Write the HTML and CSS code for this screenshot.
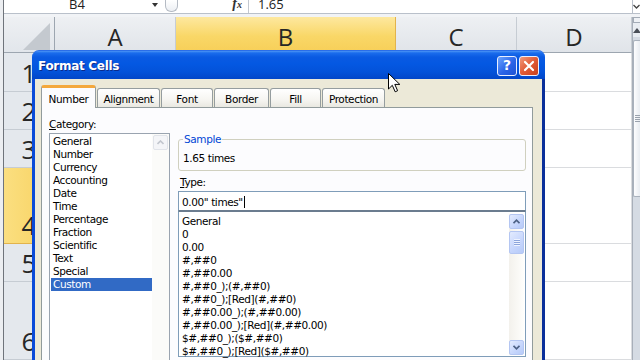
FILE: index.html
```html
<!DOCTYPE html>
<html>
<head>
<meta charset="utf-8">
<title>Format Cells</title>
<link rel="stylesheet" href="styles.css">
</head>
<body>
<div class="app">
  <div class="edge"></div>
  <div class="sheet">
    <div class="fbar">
      <div class="namebox"><span class="fb-text">B4</span></div>
      <div class="nb-arrow"><span class="tri-down"></span></div>
      <div class="grip"></div>
      <div class="fx"><span class="fb-text fx-text">f<small>x</small></span></div>
      <div class="fvalue"><span class="fb-text">1.65</span></div>
    </div>
    <div class="grid">
      <div class="corner"><svg class="corner-tri" width="51" height="36" viewBox="0 0 51 36"><polygon points="19,33 46,6 46,33" fill="#c4c9cf"/></svg></div>
      <div class="colhead">A</div>
      <div class="colhead sel">B</div>
      <div class="colhead">C</div>
      <div class="colhead">D</div>

      <div class="rowhead">1</div><div class="cell"></div><div class="cell"></div><div class="cell"></div><div class="cell"></div>
      <div class="rowhead">2</div><div class="cell"></div><div class="cell"></div><div class="cell"></div><div class="cell"></div>
      <div class="rowhead">3</div><div class="cell"></div><div class="cell"></div><div class="cell"></div><div class="cell"></div>
      <div class="rowhead sel">4</div><div class="cell"></div><div class="cell"></div><div class="cell"></div><div class="cell"></div>
      <div class="rowhead">5</div><div class="cell"></div><div class="cell"></div><div class="cell"></div><div class="cell"></div>
      <div class="rowhead">6</div><div class="cell"></div><div class="cell"></div><div class="cell"></div><div class="cell"></div>
    </div>
  </div>
  <div class="vscroll">
    <div class="vs-expand"><svg width="7" height="5" viewBox="0 0 7 5"><path d="M0.5 1 L3.5 4 L6.5 1" stroke="#444" stroke-width="1.3" fill="none"/></svg></div>
    <div class="vs-gap"></div>
    <div class="vs-body">
      <div class="vs-split"></div>
      <div class="vs-up"><span class="tri-up"></span></div>
      <div class="vs-thumb"><span class="vs-grip"></span></div>
      <div class="vs-track"></div>
    </div>
  </div>

  <div class="dialog">
    <div class="titlebar">
      <div class="title">Format Cells</div>
      <div class="tbtn help">?</div>
      <div class="tbtn close"><svg width="12" height="12" viewBox="0 0 12 12"><path d="M2 2 L10 10 M10 2 L2 10" stroke="#fff" stroke-width="2.2" stroke-linecap="round"/></svg></div>
    </div>
    <div class="dbody">
      <div class="tabs">
        <div class="tab active t-number">Number</div>
        <div class="tab t-align">Alignment</div>
        <div class="tab t-font">Font</div>
        <div class="tab t-border">Border</div>
        <div class="tab t-fill">Fill</div>
        <div class="tab t-prot">Protection</div>
      </div>
      <div class="panel">
        <div class="leftcol">
          <div class="label"><u>C</u>ategory:</div>
          <div class="catlist">
            <div class="items">
              <div class="item">General</div>
              <div class="item">Number</div>
              <div class="item">Currency</div>
              <div class="item">Accounting</div>
              <div class="item">Date</div>
              <div class="item">Time</div>
              <div class="item">Percentage</div>
              <div class="item">Fraction</div>
              <div class="item">Scientific</div>
              <div class="item">Text</div>
              <div class="item">Special</div>
              <div class="item selected">Custom</div>
            </div>
            <div class="cat-sb">
              <div class="cat-sb-btn"><svg width="7" height="5" viewBox="0 0 7 5"><path d="M0.5 4 L3.5 1 L6.5 4" stroke="#c2c6ce" stroke-width="1.6" fill="none"/></svg></div>
            </div>
          </div>
        </div>
        <div class="rightcol">
          <fieldset class="sample">
            <legend>Sample</legend>
            <div class="sample-text">1.65 times</div>
          </fieldset>
          <div class="label type-label"><u>T</u>ype:</div>
          <div class="typeinput">0.00" times"<span class="caret"></span></div>
          <div class="typelist">
            <div class="items">
              <div class="item">General</div>
              <div class="item">0</div>
              <div class="item">0.00</div>
              <div class="item">#,##0</div>
              <div class="item">#,##0.00</div>
              <div class="item">#,##0_);(#,##0)</div>
              <div class="item">#,##0_);[Red](#,##0)</div>
              <div class="item">#,##0.00_);(#,##0.00)</div>
              <div class="item">#,##0.00_);[Red](#,##0.00)</div>
              <div class="item">$#,##0_);($#,##0)</div>
              <div class="item">$#,##0_);[Red]($#,##0)</div>
            </div>
            <div class="sb">
              <div class="sb-btn"><svg width="7" height="5" viewBox="0 0 7 5"><path d="M0.5 4.2 L3.5 1.2 L6.5 4.2" stroke="#4d6185" stroke-width="1.7" fill="none"/></svg></div>
              <div class="sb-thumb"><span class="sb-grip"></span></div>
              <div class="sb-track"></div>
              <div class="sb-btn"><svg width="7" height="5" viewBox="0 0 7 5"><path d="M0.5 0.8 L3.5 3.8 L6.5 0.8" stroke="#4d6185" stroke-width="1.7" fill="none"/></svg></div>
            </div>
          </div>
        </div>
      </div>
    </div>
  </div>

  <svg class="cursor" width="13" height="20" viewBox="0 0 13 20"><path d="M0.5 0.5 L0.5 16 L4.3 12.3 L7.2 18.8 L9.6 17.7 L6.8 11.4 L11.8 11.4 Z" fill="#fff" stroke="#000" stroke-width="1" stroke-linejoin="miter"/></svg>
</div>
</body>
</html>
```

FILE: styles.css
```css
html, body {
  margin: 0;
  padding: 0;
}
body {
  width: 640px;
  height: 360px;
  overflow: hidden;
  background: #fff;
}
.app {
  position: relative;
  display: flex;
  width: 640px;
  height: 360px;
  overflow: hidden;
  background: #fff;
}

/* ---------- Excel sheet ---------- */
.edge {
  flex: none;
  width: 3px;
  border-right: 1px solid #6f747b;
  background: #eceef1;
}
.sheet {
  flex: none;
  width: 628px;
  display: flex;
  flex-direction: column;
  background: #f1f3f6;
}
.fbar {
  flex: none;
  height: 13px;
  display: flex;
  overflow: hidden;
  margin-bottom: 3px;
  border-bottom: 1px solid #b9c0ca;
  background: #fff;
  font-family: "Open Sans", sans-serif;
  font-size: 13px;
  color: #222;
}
.fb-text {
  display: block;
  line-height: 16px;
  margin-top: -4px;
}
.namebox {
  width: 146px;
  text-align: center;
}
.nb-arrow {
  width: 10px;
  display: flex;
  justify-content: center;
}
.tri-down {
  width: 0;
  height: 0;
  margin-top: 3px;
  border-left: 3px solid transparent;
  border-right: 3px solid transparent;
  border-top: 4px solid #333;
}
.grip {
  width: 11px;
  height: 11px;
  margin-left: 5px;
  border: 1px solid #b5bbc4;
  border-top: none;
  border-radius: 0 0 6px 6px;
  background: linear-gradient(#fff, #eceff3);
}
.fx {
  width: 70px;
  box-sizing: border-box;
  padding-right: 6px;
  text-align: right;
}
.fx-text {
  font-family: "Liberation Serif", serif;
  font-style: italic;
  font-weight: bold;
  font-size: 14px;
  color: #333;
}
.fx-text small {
  font-size: 10px;
}
.fvalue {
  flex: 1;
  padding-left: 9px;
  border-left: 1px solid #c3c8d0;
}

.grid {
  flex: none;
  display: grid;
  grid-template-columns: 51px 121px 220px 121px 115px;
  grid-template-rows: 36px 39px 38px 38px 76px 38px 78px;
  background: #fff;
}
.corner, .colhead, .rowhead, .cell {
  box-sizing: border-box;
  border-right: 1px solid #dadcdf;
  border-bottom: 1px solid #dadcdf;
}
.corner {
  background: linear-gradient(#eef0f3, #e2e6eb);
  border-right-color: #9da6b0;
  border-bottom-color: #9da6b0;
}
.corner-tri {
  display: block;
}
.colhead {
  display: flex;
  justify-content: center;
  align-items: flex-end;
  padding-bottom: 3px;
  background: linear-gradient(#eef0f3, #e0e4e9);
  border-right-color: #c6ccd3;
  border-bottom-color: #9da6b0;
  font-family: "Open Sans", sans-serif;
  font-size: 24px;
  line-height: 24px;
  color: #262626;
}
.colhead.sel {
  background: linear-gradient(#fde89f, #f9d767 55%, #f7cf58);
  border-right-color: #e2b34c;
  border-bottom-color: #e2a93a;
}
.rowhead {
  display: flex;
  justify-content: center;
  align-items: flex-end;
  padding-bottom: 6px;
  background: #e4e8ed;
  border-right-color: #9da6b0;
  border-bottom-color: #c6ccd3;
  font-family: "Open Sans", sans-serif;
  font-size: 26px;
  line-height: 24px;
  color: #262626;
}
.rowhead.sel {
  background: linear-gradient(90deg, #fbdf80, #f7d161);
  border-bottom-color: #e2b34c;
}

.vscroll {
  flex: none;
  width: 8px;
  display: flex;
  flex-direction: column;
}
.vs-expand {
  height: 13px;
  display: flex;
  align-items: center;
  justify-content: center;
  border-left: 1px solid #b9c0ca;
  border-bottom: 1px solid #b9c0ca;
  background: #fff;
}
.vs-gap {
  height: 3px;
  background: #f1f3f6;
}
.vs-body {
  flex: 1;
  display: flex;
  flex-direction: column;
  border-left: 1px solid #a8afb9;
  background: #d5dbe3;
}
.vs-split {
  height: 6px;
  box-sizing: border-box;
  border: 1px solid #a3abb6;
  border-right: none;
  background: #eef1f5;
}
.vs-up {
  height: 14px;
  display: flex;
  align-items: center;
  justify-content: center;
  background: #e9edf2;
}
.tri-up {
  width: 0;
  height: 0;
  border-left: 4px solid transparent;
  border-right: 4px solid transparent;
  border-bottom: 5px solid #4a4f57;
}
.vs-thumb {
  height: 157px;
  margin-top: 3px;
  box-sizing: border-box;
  border: 1px solid #a9b1bc;
  border-right: none;
  border-radius: 2px 0 0 2px;
  background: linear-gradient(90deg, #fdfdfe, #e8ecf1);
  display: flex;
  align-items: center;
  justify-content: center;
}
.vs-grip {
  width: 5px;
  height: 7px;
  background: repeating-linear-gradient(#9aa2ad 0 1px, transparent 1px 2px);
}
.vs-track {
  flex: 1;
}

/* ---------- Dialog ---------- */
.dialog {
  position: absolute;
  left: 32px;
  top: 50px;
  width: 513px;
  height: 320px;
  display: flex;
  flex-direction: column;
  font-family: "DejaVu Sans", sans-serif;
  font-size: 10.5px;
  line-height: 13px;
  letter-spacing: -0.4px;
  color: #000;
}
.titlebar {
  flex: none;
  height: 29px;
  box-sizing: border-box;
  display: flex;
  align-items: center;
  padding: 1px 6px 0 6px;
  border-radius: 7px 7px 0 0;
  background: linear-gradient(#4d95f5 0, #1a6cec 2px, #0a5ae2 6px, #0458e2 45%, #0352d9 75%, #0246c8 100%);
  border-top: 1px solid #2b6ee8;
}
.title {
  flex: 1;
  padding-top: 2px;
  font-weight: bold;
  font-size: 12px;
  letter-spacing: -0.3px;
  color: #fff;
  text-shadow: 1px 1px 0 #0c2a8a;
}
.tbtn {
  width: 20px;
  height: 20px;
  box-sizing: border-box;
  margin-left: 2px;
  border: 1px solid #e9efff;
  border-radius: 3px;
  display: flex;
  align-items: center;
  justify-content: center;
}
.help {
  background: linear-gradient(135deg, #6aa4ff, #2a64e8 55%, #1c52d4);
  color: #fff;
  font-weight: bold;
  font-size: 14px;
  letter-spacing: 0;
}
.close {
  background: linear-gradient(135deg, #f29a7c, #e05a36 50%, #c9401c);
}
.dbody {
  flex: 1;
  display: flex;
  flex-direction: column;
  padding: 6px 9px 0 6px;
  background: #ece9d8;
  border-left: 3px solid #0b4bd8;
  border-right: 3px solid #0a2f9a;
}
.tabs {
  position: relative;
  z-index: 1;
  flex: none;
  height: 22px;
  display: flex;
  align-items: flex-end;
  gap: 1px;
}
.tab {
  height: 19px;
  box-sizing: border-box;
  padding-top: 2px;
  line-height: 16px;
  text-align: center;
  border: 1px solid #959d9f;
  border-bottom: none;
  border-radius: 3px 3px 0 0;
  background: linear-gradient(#ffffff, #f6f5f1 60%, #e9e8e1);
}
.tab.active {
  height: 23px;
  margin-bottom: -1px;
  padding-top: 3px;
  border-top: 3px solid #f4a83c;
  background: #fcfcfe;
}
.t-number { width: 55px; }
.t-align { width: 63px; }
.t-font { width: 52px; }
.t-border { width: 55px; }
.t-fill { width: 51px; }
.t-prot { width: 63px; }

.panel {
  flex: 1;
  display: flex;
  gap: 8px;
  padding: 10px 6px 0 7px;
  border: 1px solid #919b9c;
  background: #fcfcfe;
}
.leftcol {
  width: 121px;
  display: flex;
  flex-direction: column;
}
.label {
  height: 13px;
}
.catlist {
  flex: 1;
  margin-top: 2px;
  display: flex;
  border: 1px solid #9aa4b0;
  background: #fff;
}
.catlist .items {
  width: 102px;
  padding-top: 1px;
}
.catlist .item {
  margin-left: 1px;
  padding-left: 2px;
  height: 13px;
}
.catlist .item.selected {
  background: #316ac5;
  color: #fff;
}
.cat-sb {
  width: 17px;
  background: #fbfbf9;
}
.cat-sb-btn {
  height: 15px;
  margin: 1px 1px 0 1px;
  box-sizing: border-box;
  border: 1px solid #e1e4ea;
  border-radius: 2px;
  background: #f4f5f8;
  display: flex;
  align-items: center;
  justify-content: center;
}

.rightcol {
  width: 348px;
  display: flex;
  flex-direction: column;
}
.sample {
  margin: 15px 0 0 0;
  padding: 6px 4px 5px 4px;
  border: 1px solid #d0d0bf;
  border-radius: 3px;
  min-width: 0;
}
.sample legend {
  padding: 0 1px;
  color: #0046d5;
}
.type-label {
  margin-top: 5px;
  padding-left: 2px;
}
.typeinput {
  margin-top: 2px;
  height: 20px;
  box-sizing: border-box;
  padding: 2px 3px 0 3px;
  line-height: 16px;
  border: 1px solid #7f9db9;
  border-bottom-color: #6b7c8f;
  background: #fff;
}
.caret {
  display: inline-block;
  width: 0;
  height: 12px;
  margin-left: 1px;
  vertical-align: -2px;
  border-left: 1px solid #000;
}
.typelist {
  height: 146px;
  box-sizing: border-box;
  display: flex;
  border: 1px solid #7f9db9;
  border-top-color: #6b7c8f;
  background: #fff;
}
.typelist .items {
  flex: 1;
  padding: 3px 0 0 3px;
}
.typelist .item {
  height: 13px;
  white-space: nowrap;
}
.sb {
  width: 15px;
  margin: 2px 1px 1px 0;
  display: flex;
  flex-direction: column;
  background: linear-gradient(90deg, #f3f1ec, #fefefc);
}
.sb-btn, .sb-thumb {
  box-sizing: border-box;
  border: 1px solid #b4c6f2;
  border-radius: 2px;
  background: linear-gradient(135deg, #e3ebfe, #c5d5fc 60%, #b6caf8);
  display: flex;
  align-items: center;
  justify-content: center;
}
.sb-btn {
  height: 15px;
}
.sb-thumb {
  height: 23px;
  margin-top: 2px;
}
.sb-grip {
  width: 6px;
  height: 7px;
  background: repeating-linear-gradient(#eef3ff 0 1px, #8ca5dc 1px 2px);
}
.sb-track {
  flex: 1;
}

.cursor {
  position: absolute;
  left: 388px;
  top: 73px;
}
```
